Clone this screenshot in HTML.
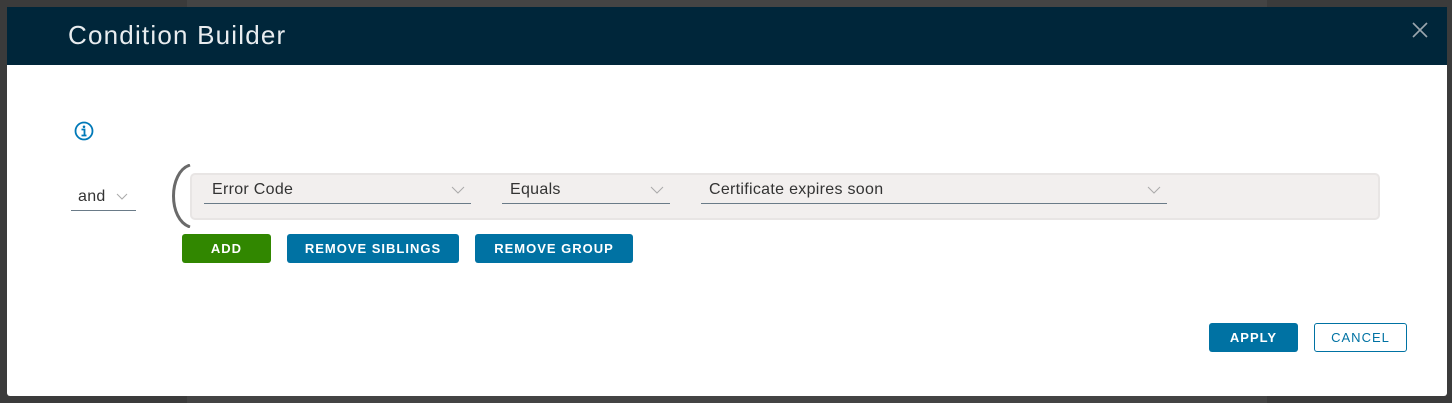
<!DOCTYPE html>
<html><head><style>
*{box-sizing:border-box;margin:0;padding:0}
body{width:1452px;height:403px;background:#3b3b3b;position:relative;overflow:hidden;font-family:"Liberation Sans",sans-serif}
.strip{position:absolute;top:0;height:403px;background:#474747}
.modal{position:absolute;left:7px;top:7px;width:1440px;height:389px;background:#fff;border-radius:0 0 3px 3px;overflow:hidden}
.hdr{position:absolute;left:0;top:0;width:100%;height:58px;background:#00263a}
.title{position:absolute;left:61px;top:13px;font-size:26px;color:#e8ecef;letter-spacing:1.2px}
.abs{position:absolute}
.sel{position:absolute;border-bottom:1px solid #6a7b88;height:25px;font-size:16px;color:#333;padding-left:8px;line-height:22px;letter-spacing:0.3px}
.chev{position:absolute;right:6px;top:3px}
.box{position:absolute;left:183px;top:166px;width:1190px;height:47px;background:#f2efee;border:2px solid #e8e5e4;border-radius:5px}
.btn{position:absolute;height:29px;border-radius:3px;color:#fff;font-weight:bold;font-size:13px;letter-spacing:1px;text-align:center;line-height:29px;background:#0072a3}
</style></head><body>
<div class="strip" style="left:187px;width:1080px;background:#444"></div>
<div class="modal">
 <div class="hdr"><div class="title">Condition Builder</div>
  <svg class="abs" style="left:1405px;top:15px" width="16" height="16"><path d="M1 1L15 15M15 1L1 15" stroke="#9aa6ae" stroke-width="1.6"/></svg>
 </div>
 <svg class="abs" style="left:67px;top:114px" width="20" height="20"><circle cx="10" cy="10" r="8.5" fill="none" stroke="#0079b8" stroke-width="1.8"/><circle cx="10" cy="5.8" r="1.3" fill="#0079b8"/><path d="M7.5 8.5H10.5V14M7.5 14.5H12.5" stroke="#0079b8" stroke-width="1.8" fill="none"/></svg>
 <div class="sel" style="left:64px;top:179px;width:65px;font-size:16px;padding-left:7px">and<svg class="chev" width="12" height="8" style="right:8px;top:7px"><path d="M1 1L6 6L11 1" stroke="#aaa" fill="none"/></svg></div>
 <svg class="abs" style="left:158px;top:157px" width="28" height="64"><path d="M25 1C3 8 3 56 25 63" stroke="#6a6a6a" stroke-width="3" fill="none"/></svg>
 <div class="box"></div>
 <div class="sel" style="left:197px;top:172px;width:267px">Error Code<svg class="chev" width="14" height="9" style="top:7px"><path d="M1 1L7 7L13 1" stroke="#aaa" fill="none"/></svg></div>
 <div class="sel" style="left:495px;top:172px;width:168px">Equals<svg class="chev" width="14" height="9" style="top:7px"><path d="M1 1L7 7L13 1" stroke="#aaa" fill="none"/></svg></div>
 <div class="sel" style="left:694px;top:172px;width:466px">Certificate expires soon<svg class="chev" width="14" height="9" style="top:7px"><path d="M1 1L7 7L13 1" stroke="#aaa" fill="none"/></svg></div>
 <div class="btn" style="left:175px;top:227px;width:89px;background:#318700">ADD</div>
 <div class="btn" style="left:280px;top:227px;width:172px">REMOVE SIBLINGS</div>
 <div class="btn" style="left:468px;top:227px;width:158px">REMOVE GROUP</div>
 <div class="btn" style="left:1202px;top:316px;width:89px">APPLY</div>
 <div class="btn" style="left:1307px;top:316px;width:93px;background:#fff;border:1px solid #0072a3;color:#0072a3;font-weight:normal;line-height:27px">CANCEL</div>
</div>
</body></html>
